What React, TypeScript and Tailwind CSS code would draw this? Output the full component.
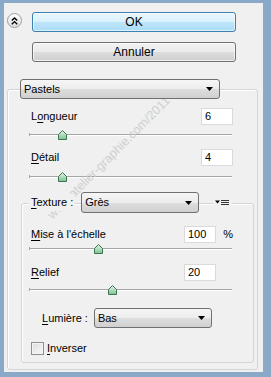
import React from "react";

const ui = "font-['Liberation_Sans',Arial,sans-serif] text-[11px] text-black";

function Acc({ k, rest, pre = "" }: { k: string; rest: string; pre?: string }) {
  return (
    <span className="whitespace-nowrap">
      {pre}
      <span className="underline underline-offset-[2px]">{k}</span>
      {rest}
    </span>
  );
}

function Arrow() {
  return (
    <svg width="7" height="4" viewBox="0 0 7 4">
      <path d="M0 0H7L3.5 4Z" fill="#000" />
    </svg>
  );
}

function Slider({ pos }: { pos: number }) {
  return (
    <div className="relative h-[10px] w-[203px]">
      <div className="absolute left-0 right-0 top-[4px] h-px bg-[#a6a6a6]" />
      <div className="absolute left-0 right-0 top-[5px] h-px bg-white" />
      <div className="absolute left-0 top-[3px] h-[3px] w-px bg-[#a6a6a6]" />
      <svg className="absolute top-0" style={{ left: pos - 4 }} width="9" height="10" viewBox="0 0 9 10">
        <defs>
          <linearGradient id="thumb" x1="0" y1="0" x2="0" y2="1">
            <stop offset="0%" stopColor="#e4f6e9" />
            <stop offset="100%" stopColor="#7fbf93" />
          </linearGradient>
        </defs>
        <path d="M0.5 4.5L4.5 0.5L8.5 4.5V9.5H0.5Z" fill="url(#thumb)" stroke="#3b7550" strokeWidth="1" />
      </svg>
    </div>
  );
}

function Field({ value, w = "w-[32px]" }: { value: string; w?: string }) {
  return (
    <div className={`h-[17px] ${w} border border-[#dadada] bg-white pl-[3px] leading-[15px]`}>{value}</div>
  );
}

const selectBg =
  "rounded-[3px] border border-[#707070] bg-[linear-gradient(#f6f6f6,#ececec_50%,#dedede_50%,#d0d0d0)]";

export default function App() {
  return (
    <div
      className={`${ui} relative h-[377px] w-[271px] overflow-hidden border-b-[5px] border-l-[4px] border-r-[8px] border-t-[3px] border-[#8aa8c8] bg-[#f0f0f0]`}
    >
      {/* top buttons */}
      <div className="flex items-start pt-[9px]">
        <div className="ml-[3px] mt-[1px] flex h-[15px] w-[15px] items-center justify-center rounded-full border border-[#9c9c9c] bg-[linear-gradient(#ffffff,#dedede)]">
          <svg width="7" height="8" viewBox="0 0 7 8">
            <path d="M0.8 3.6L3.5 1L6.2 3.6M0.8 7.2L3.5 4.6L6.2 7.2" fill="none" stroke="#000" strokeWidth="1.4" />
          </svg>
        </div>
        <div className="ml-[10px] flex w-[204px] flex-col gap-[10px]">
          <div className="flex h-[20px] items-center justify-center rounded-[3px] border border-[#3c7fb1] bg-[linear-gradient(#eaf7fd,#d8f0fc_50%,#bfe6fb_50%,#a9dbf6)] text-[12px] shadow-[inset_0_0_0_1px_rgba(255,255,255,0.6)]">
            OK
          </div>
          <div className="flex h-[20px] items-center justify-center rounded-[3px] border border-[#707070] bg-[linear-gradient(#f2f2f2,#ebebeb_50%,#dddddd_50%,#cfcfcf)] text-[12px] shadow-[inset_0_0_0_1px_rgba(255,255,255,0.7)]">
            Annuler
          </div>
        </div>
      </div>

      {/* Pastels select */}
      <div className={`relative z-10 ml-[16px] mt-[17px] flex h-[20px] w-[200px] items-center justify-between pl-[3px] pr-[6px] ${selectBg}`}>
        <span>Pastels</span>
        <Arrow />
      </div>

      {/* outer group */}
      <div className="-mt-[10px] ml-[3px] h-[281px] w-[251px] rounded-[3px] border border-[#d5d5d5] shadow-[inset_1px_1px_0_#fff]">
        <div className="flex items-center justify-between pl-[23px] pr-[24px] pt-[18px]">
          <Acc pre="L" k="o" rest="ngueur" />
          <Field value="6" />
        </div>
        <div className="ml-[21px] mt-[5px]">
          <Slider pos={33} />
        </div>
        <div className="mt-[9px] flex items-center justify-between pl-[23px] pr-[24px]">
          <Acc k="D" rest="étail" />
          <Field value="4" />
        </div>
        <div className="ml-[21px] mt-[6px]">
          <Slider pos={33} />
        </div>

        {/* texture row over inner group border */}
        <div className="relative z-10 ml-[21px] mt-[10px] flex h-[21px] items-center">
          <div className="bg-[#f0f0f0] px-[2px]">
            <Acc k="T" rest="exture :" />
          </div>
          <div className={`ml-[6px] flex h-[21px] w-[118px] items-center justify-between pl-[3px] pr-[6px] ${selectBg}`}>
            <span>Grès</span>
            <Arrow />
          </div>
          <div className="ml-[14px] flex h-[10px] items-center bg-[#f0f0f0] px-[2px]">
            <svg width="15" height="7" viewBox="0 0 15 7">
              <path d="M0 1.5H5L2.5 4.5Z" fill="#000" />
              <path d="M6 1.5H14M6 3.5H14M6 5.5H14" stroke="#333" strokeWidth="1" />
            </svg>
          </div>
        </div>

        {/* inner group */}
        <div className="-mt-[10px] ml-[13px] h-[160px] w-[233px] rounded-[3px] border border-[#d5d5d5] shadow-[inset_1px_1px_0_#fff]">
          <div className="flex items-center pl-[9px] pr-[20px] pt-[22px]">
            <span className="flex-1">
              <Acc k="M" rest="ise à l'échelle" />
            </span>
            <Field value="100" />
            <span className="ml-[7px] w-[10px] text-right">%</span>
          </div>
          <div className="ml-[7px] mt-px">
            <Slider pos={69} />
          </div>
          <div className="mt-[10px] flex items-center justify-between pl-[9px] pr-[37px]">
            <Acc k="R" rest="elief" />
            <Field value="20" />
          </div>
          <div className="ml-[7px] mt-[4px]">
            <Slider pos={83} />
          </div>
          <div className="ml-[20px] mt-[13px] flex items-center">
            <Acc k="L" rest="umière :" />
            <div className={`ml-[6px] flex h-[20px] w-[118px] items-center justify-between pl-[3px] pr-[6px] ${selectBg}`}>
              <span>Bas</span>
              <Arrow />
            </div>
          </div>
          <div className="ml-[9px] mt-[12px] flex items-center gap-[3px]">
            <div className="h-[13px] w-[13px] border border-[#8e8f8f] bg-[linear-gradient(135deg,#dcdcdc,#fafafa)] shadow-[inset_0_0_0_1px_#f4f4f4]" />
            <Acc k="I" rest="nverser" />
          </div>
        </div>
      </div>

      {/* watermark */}
      <div className="pointer-events-none absolute left-[105px] top-[155px] -translate-x-1/2 -translate-y-1/2 -rotate-45 whitespace-nowrap text-[12.5px] text-[#cfcfcf]">
        www.atelier-graphie.com/2011
      </div>
    </div>
  );
}
